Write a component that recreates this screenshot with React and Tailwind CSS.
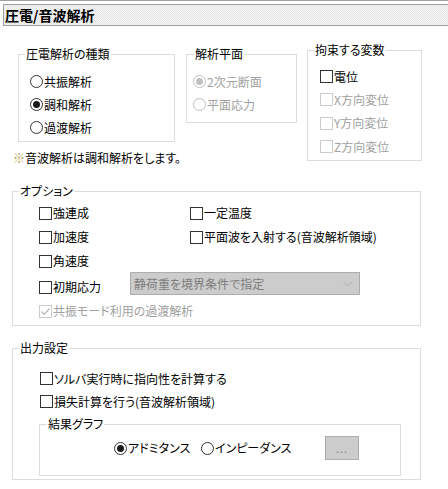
import React from "react";

function Radio({ checked, disabled, children }) {
  return (
    <div className={`flex items-center gap-[1px] ${disabled ? "text-[#a0a0a0]" : "text-black"}`}>
      <span
        className={`w-[13px] h-[13px] rounded-full border bg-white flex items-center justify-center shrink-0 ${
          disabled ? "border-[#c0c0c0]" : "border-[#333333]"
        }`}
      >
        {checked && (
          <span className={`w-[7px] h-[7px] rounded-full ${disabled ? "bg-[#c0c0c0]" : "bg-[#1a1a1a]"}`} />
        )}
      </span>
      <span className="whitespace-nowrap">{children}</span>
    </div>
  );
}

function Check({ checked, disabled, children }) {
  return (
    <div className={`flex items-center gap-[1px] ${disabled ? "text-[#a0a0a0]" : "text-black"}`}>
      <span
        className={`w-[13px] h-[13px] border bg-white flex items-center justify-center shrink-0 ${
          disabled ? "border-[#cccccc]" : "border-[#333333]"
        }`}
      >
        {checked && (
          <svg width="11" height="11" viewBox="0 0 11 11">
            <path d="M1.5 5.5 L4.3 8.3 L9.5 2.5" fill="none" stroke="#b5b5b5" strokeWidth="1.2" />
          </svg>
        )}
      </span>
      <span className="whitespace-nowrap">{children}</span>
    </div>
  );
}

function Group({ title, className, legendLeft, children }) {
  return (
    <div className={`relative border border-[#dcdcdc] ${className}`}>
      <span className={`absolute -top-[9px] ${legendLeft} px-[1px] bg-white leading-[16px] whitespace-nowrap`}>
        {title}
      </span>
      {children}
    </div>
  );
}

export default function App() {
  return (
    <div className="w-[448px] h-[489px] overflow-hidden bg-white flex flex-col text-[12px] leading-[16px] text-black font-['Noto_Sans_CJK_JP','Noto_Sans',sans-serif] [font-feature-settings:'palt']">
      <div className="h-px bg-[#a0a0a0]" />
      <div className="mt-[3px] ml-[3px] h-[22px] border-y border-l border-[#a0a0a0] flex items-center pl-[1px] bg-[repeating-conic-gradient(#e3e3e3_0%_25%,#f7f7f7_0%_50%)] bg-[length:2px_2px]">
        <span className="text-[14px] font-bold leading-[18px] [font-feature-settings:normal]">圧電/音波解析</span>
      </div>

      <div className="flex items-start">
        <div className="flex flex-col">
          <div className="flex items-start">
            <Group title="圧電解析の種類" legendLeft="left-[6px]" className="ml-[18px] mt-[28px] w-[157px] h-[88px] pl-[11px] pt-[15px]">
              <div className="h-[23px] flex items-center"><Radio>共振解析</Radio></div>
              <div className="h-[23px] flex items-center"><Radio checked>調和解析</Radio></div>
              <div className="h-[23px] flex items-center"><Radio>過渡解析</Radio></div>
            </Group>
            <Group title="解析平面" legendLeft="left-[7px]" className="ml-[11px] mt-[28px] w-[111px] h-[69px] pl-[6px] pt-[15px]">
              <div className="h-[23px] flex items-center"><Radio checked disabled>2次元断面</Radio></div>
              <div className="h-[23px] flex items-center"><Radio disabled>平面応力</Radio></div>
            </Group>
          </div>
          <div className="ml-[13px] mt-[8px] whitespace-nowrap">
            <span className="text-[#b09a40]">※</span>音波解析は調和解析をします。
          </div>
        </div>
        <Group title="拘束する変数" legendLeft="left-[6px]" className="ml-[10px] mt-[24px] w-[115px] h-[111px] pl-[12px] pt-[14px]">
          <div className="h-[23px] flex items-center"><Check>電位</Check></div>
          <div className="h-[23px] flex items-center"><Check disabled>X方向変位</Check></div>
          <div className="h-[24px] flex items-center"><Check disabled>Y方向変位</Check></div>
          <div className="h-[23px] flex items-center"><Check disabled>Z方向変位</Check></div>
        </Group>
      </div>

      <Group title="オプション" legendLeft="left-[6px]" className="ml-[12px] mt-[25px] w-[409px] h-[135px] pl-[26px] pt-[9px]">
        <div className="h-[24px] flex items-center">
          <div className="w-[151px]"><Check>強連成</Check></div>
          <Check>一定温度</Check>
        </div>
        <div className="h-[24px] flex items-center">
          <div className="w-[151px]"><Check>加速度</Check></div>
          <Check>平面波を入射する(音波解析領域)</Check>
        </div>
        <div className="h-[24px] flex items-center">
          <Check>角速度</Check>
        </div>
        <div className="h-[28px] flex items-center">
          <div className="w-[91px]"><Check>初期応力</Check></div>
          <div className="self-start -mt-[1px] w-[230px] h-[23px] bg-[#cccccc] border border-[#adadad] flex items-center justify-between pl-[3px] pr-[7px]">
            <span className="text-[#7d7d7d] whitespace-nowrap">静荷重を境界条件で指定</span>
            <svg width="9" height="6" viewBox="0 0 9 6">
              <path d="M0.5 1 L4.5 5 L8.5 1" fill="none" stroke="#a8a8a8" strokeWidth="1" />
            </svg>
          </div>
        </div>
        <div className="h-[20px] flex items-center">
          <Check checked disabled>共振モード利用の過渡解析</Check>
        </div>
      </Group>

      <Group title="出力設定" legendLeft="left-[6px]" className="ml-[12px] mt-[22px] w-[409px] h-[132px] pl-[26px] pt-[18px]">
        <div className="h-[23px] flex items-center pl-[1px]">
          <Check>ソルバ実行時に指向性を計算する</Check>
        </div>
        <div className="h-[23px] flex items-center pl-[1px]">
          <Check>損失計算を行う(音波解析領域)</Check>
        </div>
        <Group title="結果グラフ" legendLeft="left-[7px]" className="mt-[11px] w-[362px] h-[52px] pt-[11px]">
          <div className="h-[24px] flex items-center pl-[74px]">
            <div className="w-[87px]"><Radio checked>アドミタンス</Radio></div>
            <div className="w-[124px]"><Radio>インピーダンス</Radio></div>
            <div className="w-[34px] h-[24px] bg-[#cccccc] border border-[#adadad] flex items-center justify-center">
              <span className="text-[11px] leading-[11px] text-[#8a7f70] tracking-[1px]">...</span>
            </div>
          </div>
        </Group>
      </Group>
    </div>
  );
}
